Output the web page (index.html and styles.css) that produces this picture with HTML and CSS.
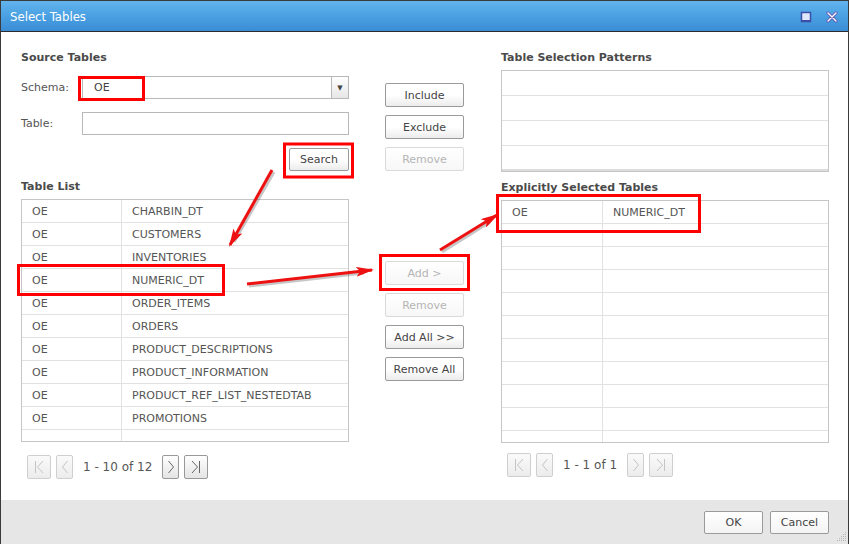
FILE: index.html
```html
<!DOCTYPE html>
<html>
<head>
  <title>Select Tables</title>
  <link rel="stylesheet" href="styles.css">
</head>
<body>
  <div class="window">
    <div class="titlebar">
      <span class="title">Select Tables</span>
      <span class="title-icons">
        <svg width="12" height="12" viewBox="0 0 12 12"><rect x="1.5" y="1.5" width="9" height="9" fill="#dfe8fb" stroke="#3c4fa6" stroke-width="1.5"/><rect x="1" y="9" width="10" height="2" fill="#3c4fa6"/></svg>
        <svg width="12" height="12" viewBox="0 0 12 12"><path d="M2 2 L10 10 M10 2 L2 10" stroke="#5a4fb0" stroke-width="3" stroke-linecap="round"/><path d="M2 2 L10 10 M10 2 L2 10" stroke="#fff" stroke-width="1.4" stroke-linecap="round"/></svg>
      </span>
    </div>

    <div class="content">
      <!-- left column -->
      <div class="col-left">
        <h3>Source Tables</h3>
        <div class="field schema-row">
          <label>Schema:</label>
          <div class="select">
            <span class="select-value">OE</span>
            <span class="select-btn">&#9660;</span>
          </div>
        </div>
        <div class="field table-row">
          <label>Table:</label>
          <div class="input"></div>
        </div>
        <div class="search-row">
          <button class="btn search-btn">Search</button>
        </div>
        <h3 class="list-title">Table List</h3>
        <div class="grid left-grid">
          <div class="row"><span>OE</span><span>CHARBIN_DT</span></div>
          <div class="row"><span>OE</span><span>CUSTOMERS</span></div>
          <div class="row"><span>OE</span><span>INVENTORIES</span></div>
          <div class="row"><span>OE</span><span>NUMERIC_DT</span></div>
          <div class="row"><span>OE</span><span>ORDER_ITEMS</span></div>
          <div class="row"><span>OE</span><span>ORDERS</span></div>
          <div class="row"><span>OE</span><span>PRODUCT_DESCRIPTIONS</span></div>
          <div class="row"><span>OE</span><span>PRODUCT_INFORMATION</span></div>
          <div class="row"><span>OE</span><span>PRODUCT_REF_LIST_NESTEDTAB</span></div>
          <div class="row"><span>OE</span><span>PROMOTIONS</span></div>
          <div class="row"><span></span><span></span></div>
        </div>
        <div class="pager">
          <span class="pg pg-first off"><svg width="12" height="14" viewBox="0 0 12 14"><path d="M2.5 1 V13 M10 1 L4.5 7 L10 13" fill="none" stroke="currentColor"/></svg></span>
          <span class="pg pg-prev off"><svg width="8" height="14" viewBox="0 0 8 14"><path d="M6.5 1 L1.5 7 L6.5 13" fill="none" stroke="currentColor"/></svg></span>
          <span class="pg-text">1 - 10 of 12</span>
          <span class="pg pg-next"><svg width="8" height="14" viewBox="0 0 8 14"><path d="M1.5 1 L6.5 7 L1.5 13" fill="none" stroke="currentColor"/></svg></span>
          <span class="pg pg-last"><svg width="12" height="14" viewBox="0 0 12 14"><path d="M2 1 L7.5 7 L2 13 M9.5 1 V13" fill="none" stroke="currentColor"/></svg></span>
        </div>
      </div>

      <!-- middle buttons -->
      <div class="col-mid">
        <div class="btn-group top-group">
          <button class="btn">Include</button>
          <button class="btn">Exclude</button>
          <button class="btn" disabled>Remove</button>
        </div>
        <div class="btn-group add-group">
          <button class="btn" disabled>Add &gt;</button>
          <button class="btn" disabled>Remove</button>
          <button class="btn">Add All &gt;&gt;</button>
          <button class="btn">Remove All</button>
        </div>
      </div>

      <!-- right column -->
      <div class="col-right">
        <h3>Table Selection Patterns</h3>
        <div class="patterns">
          <div class="prow"></div>
          <div class="prow"></div>
          <div class="prow"></div>
          <div class="prow"></div>
        </div>
        <h3 class="list-title">Explicitly Selected Tables</h3>
        <div class="grid right-grid">
          <div class="row"><span>OE</span><span>NUMERIC_DT</span></div>
          <div class="row"><span></span><span></span></div>
          <div class="row"><span></span><span></span></div>
          <div class="row"><span></span><span></span></div>
          <div class="row"><span></span><span></span></div>
          <div class="row"><span></span><span></span></div>
          <div class="row"><span></span><span></span></div>
          <div class="row"><span></span><span></span></div>
          <div class="row"><span></span><span></span></div>
          <div class="row"><span></span><span></span></div>
          <div class="row"><span></span><span></span></div>
        </div>
        <div class="pager right-pager">
          <span class="pg pg-first off"><svg width="12" height="14" viewBox="0 0 12 14"><path d="M2.5 1 V13 M10 1 L4.5 7 L10 13" fill="none" stroke="currentColor"/></svg></span>
          <span class="pg pg-prev off"><svg width="8" height="14" viewBox="0 0 8 14"><path d="M6.5 1 L1.5 7 L6.5 13" fill="none" stroke="currentColor"/></svg></span>
          <span class="pg-text">1 - 1 of 1</span>
          <span class="pg pg-next off"><svg width="8" height="14" viewBox="0 0 8 14"><path d="M1.5 1 L6.5 7 L1.5 13" fill="none" stroke="currentColor"/></svg></span>
          <span class="pg pg-last off"><svg width="12" height="14" viewBox="0 0 12 14"><path d="M2 1 L7.5 7 L2 13 M9.5 1 V13" fill="none" stroke="currentColor"/></svg></span>
        </div>
      </div>
    </div>

    <div class="footer">
      <button class="btn foot-btn">OK</button>
      <button class="btn foot-btn">Cancel</button>
      <svg class="grip" width="12" height="12" viewBox="0 0 12 12">
        <g fill="#b5b5b5">
          <rect x="10" y="1" width="1" height="1"/>
          <rect x="8" y="3" width="1" height="1"/><rect x="10" y="3" width="1" height="1"/>
          <rect x="6" y="5" width="1" height="1"/><rect x="8" y="5" width="1" height="1"/><rect x="10" y="5" width="1" height="1"/>
          <rect x="4" y="7" width="1" height="1"/><rect x="6" y="7" width="1" height="1"/><rect x="8" y="7" width="1" height="1"/><rect x="10" y="7" width="1" height="1"/>
          <rect x="2" y="9" width="1" height="1"/><rect x="4" y="9" width="1" height="1"/><rect x="6" y="9" width="1" height="1"/><rect x="8" y="9" width="1" height="1"/><rect x="10" y="9" width="1" height="1"/>
        </g>
      </svg>
    </div>

    <!-- red annotation overlay -->
    <svg class="annotations" width="849" height="544" viewBox="0 0 849 544">
      <defs>
        <marker id="head" markerWidth="18" markerHeight="10" refX="16" refY="5" orient="auto" markerUnits="userSpaceOnUse">
          <path d="M0 0 L18 5 L0 10 L4 5 Z" fill="#ee1111"/>
        </marker>
      </defs>
      <g fill="none" stroke="#ff0000" stroke-width="3">
        <rect x="79.5" y="77.5" width="64" height="22"/>
        <rect x="284.5" y="144" width="68" height="33"/>
        <rect x="18.5" y="265.5" width="205" height="29"/>
        <rect x="380.5" y="255.5" width="88" height="34"/>
        <rect x="497.5" y="195.5" width="202" height="36"/>
      </g>
      <g stroke="rgba(0,0,0,0.22)" stroke-width="3" fill="none">
        <line x1="274" y1="172" x2="234" y2="242"/>
        <line x1="249" y1="286" x2="364" y2="273"/>
        <line x1="442" y1="252" x2="490" y2="222"/>
      </g>
      <g stroke="#ee1111" stroke-width="3" fill="none" marker-end="url(#head)">
        <line x1="272" y1="170" x2="230" y2="245"/>
        <line x1="247" y1="284" x2="372" y2="270"/>
        <line x1="440" y1="250" x2="497" y2="215"/>
      </g>
    </svg>
  </div>
</body>
</html>
```

FILE: styles.css
```css
html, body {
  margin: 0;
  padding: 0;
  background: #fff;
}

body {
  font-family: "DejaVu Sans", Verdana, sans-serif;
  font-size: 11px;
  color: #555;
}

.window {
  position: relative;
  width: 849px;
  height: 544px;
  box-sizing: border-box;
  border: 1px solid #3a3a3a;
  border-bottom: none;
  display: flex;
  flex-direction: column;
  overflow: hidden;
}

/* title bar */
.titlebar {
  height: 30px;
  flex: none;
  display: flex;
  align-items: center;
  justify-content: space-between;
  padding: 0 10px 0 9px;
  background: linear-gradient(#62b4ec, #4aa0e2 50%, #3b8dd5);
  border-bottom: 1px solid #2c2c2c;
}

.title {
  font-family: "DejaVu Sans Condensed", "DejaVu Sans", sans-serif;
  font-stretch: condensed;
  font-size: 13px;
  color: #fff;
}

.title-icons {
  display: flex;
  gap: 14px;
  margin-top: 1px;
}

/* main content */
.content {
  flex: 1;
  display: flex;
  padding: 18px 19px 0 20px;
}

h3 {
  margin: 0;
  font-size: 11px;
  line-height: 16px;
  font-weight: bold;
  color: #4a4a4a;
}

.col-left {
  width: 328px;
  flex: none;
  display: flex;
  flex-direction: column;
}

.field {
  display: flex;
  align-items: center;
}

.field label {
  width: 61px;
  flex: none;
}

.schema-row {
  margin-top: 10px;
}

.table-row {
  margin-top: 13px;
}

.select {
  flex: 1;
  height: 23px;
  box-sizing: border-box;
  border: 1px solid #b8b8b8;
  display: flex;
  align-items: center;
}

.select-value {
  flex: 1;
  padding-left: 11px;
  color: #444;
}

.select-btn {
  width: 17px;
  height: 21px;
  box-sizing: border-box;
  border-left: 1px solid #b8b8b8;
  background: linear-gradient(#ffffff, #e6e6e6);
  font-size: 7px;
  color: #444;
  display: flex;
  align-items: center;
  justify-content: center;
}

.input {
  flex: 1;
  height: 23px;
  box-sizing: border-box;
  border: 1px solid #b8b8b8;
}

.search-row {
  display: flex;
  justify-content: flex-end;
  margin-top: 13px;
}

.list-title {
  margin-top: 8px;
}

/* buttons */
.btn {
  font-family: "DejaVu Sans", Verdana, sans-serif;
  font-size: 11px;
  color: #444;
  height: 24px;
  padding: 0 8px;
  box-sizing: border-box;
  border: 1px solid #9a9a9a;
  border-radius: 2px;
  background: linear-gradient(#ffffff, #ffffff 50%, #ececec);
}

.btn:disabled {
  color: #b5b5b5;
  border-color: #dadada;
  background: linear-gradient(#ffffff, #f7f7f7);
}

.search-btn {
  width: 60px;
  height: 23px;
}

.col-mid {
  width: 79px;
  flex: none;
  margin-left: 36px;
  display: flex;
  flex-direction: column;
}

.btn-group {
  display: flex;
  flex-direction: column;
  gap: 8px;
}

.btn-group .btn {
  width: 79px;
  padding: 0;
}

.top-group {
  margin-top: 33px;
}

.add-group {
  margin-top: 90px;
}

/* grids */
.grid {
  margin-top: 4px;
  height: 243px;
  box-sizing: border-box;
  border: 1px solid #c6c6c6;
  overflow: hidden;
}

.row {
  display: flex;
  height: 23px;
  box-sizing: border-box;
  border-bottom: 1px solid #e2e2e2;
}

.row span {
  display: flex;
  align-items: center;
  padding-left: 10px;
  color: #555;
  white-space: nowrap;
}

.row span:first-child {
  width: 100px;
  box-sizing: border-box;
  border-right: 1px solid #e2e2e2;
}

.right-grid .row span:first-child {
  width: 101px;
}

.col-right {
  width: 328px;
  flex: none;
  margin-left: 37px;
  display: flex;
  flex-direction: column;
}

.patterns {
  margin-top: 4px;
  height: 102px;
  box-sizing: border-box;
  border: 1px solid #c6c6c6;
}

.prow {
  height: 25px;
  box-sizing: border-box;
  border-bottom: 1px solid #e2e2e2;
}

.prow:last-child {
  border-bottom: 2px solid #dcdcdc;
}

/* pager */
.pager {
  display: flex;
  align-items: center;
  margin-top: 13px;
  padding-left: 6px;
}

.right-pager {
  margin-top: 10px;
}

.pg {
  height: 24px;
  box-sizing: border-box;
  border: 1px solid #999;
  border-radius: 2px;
  background: linear-gradient(#ffffff, #e4e4e4);
  color: #666;
  display: flex;
  align-items: center;
  justify-content: center;
}

.pg.off {
  border-color: #cfcfcf;
  color: #c4c4c4;
  background: linear-gradient(#fafafa, #ececec);
}

.pg-first, .pg-last {
  width: 24px;
}

.pg-prev, .pg-next {
  width: 17px;
}

.pg-prev {
  margin-left: 5px;
}

.pg-last {
  margin-left: 5px;
}

.pg-text {
  margin: 0 10px 0 10px;
  font-size: 12px;
  color: #555;
}

/* footer */
.footer {
  height: 44px;
  flex: none;
  background: #e6e6e6;
  display: flex;
  align-items: center;
  justify-content: flex-end;
  gap: 7px;
  padding-right: 19px;
  position: relative;
}

.foot-btn {
  width: 59px;
  height: 23px;
  background: linear-gradient(#ffffff, #f4f4f4);
}

.grip {
  position: absolute;
  right: 1px;
  bottom: 1px;
}

.annotations {
  position: absolute;
  left: -1px;
  top: -1px;
  pointer-events: none;
}
```
